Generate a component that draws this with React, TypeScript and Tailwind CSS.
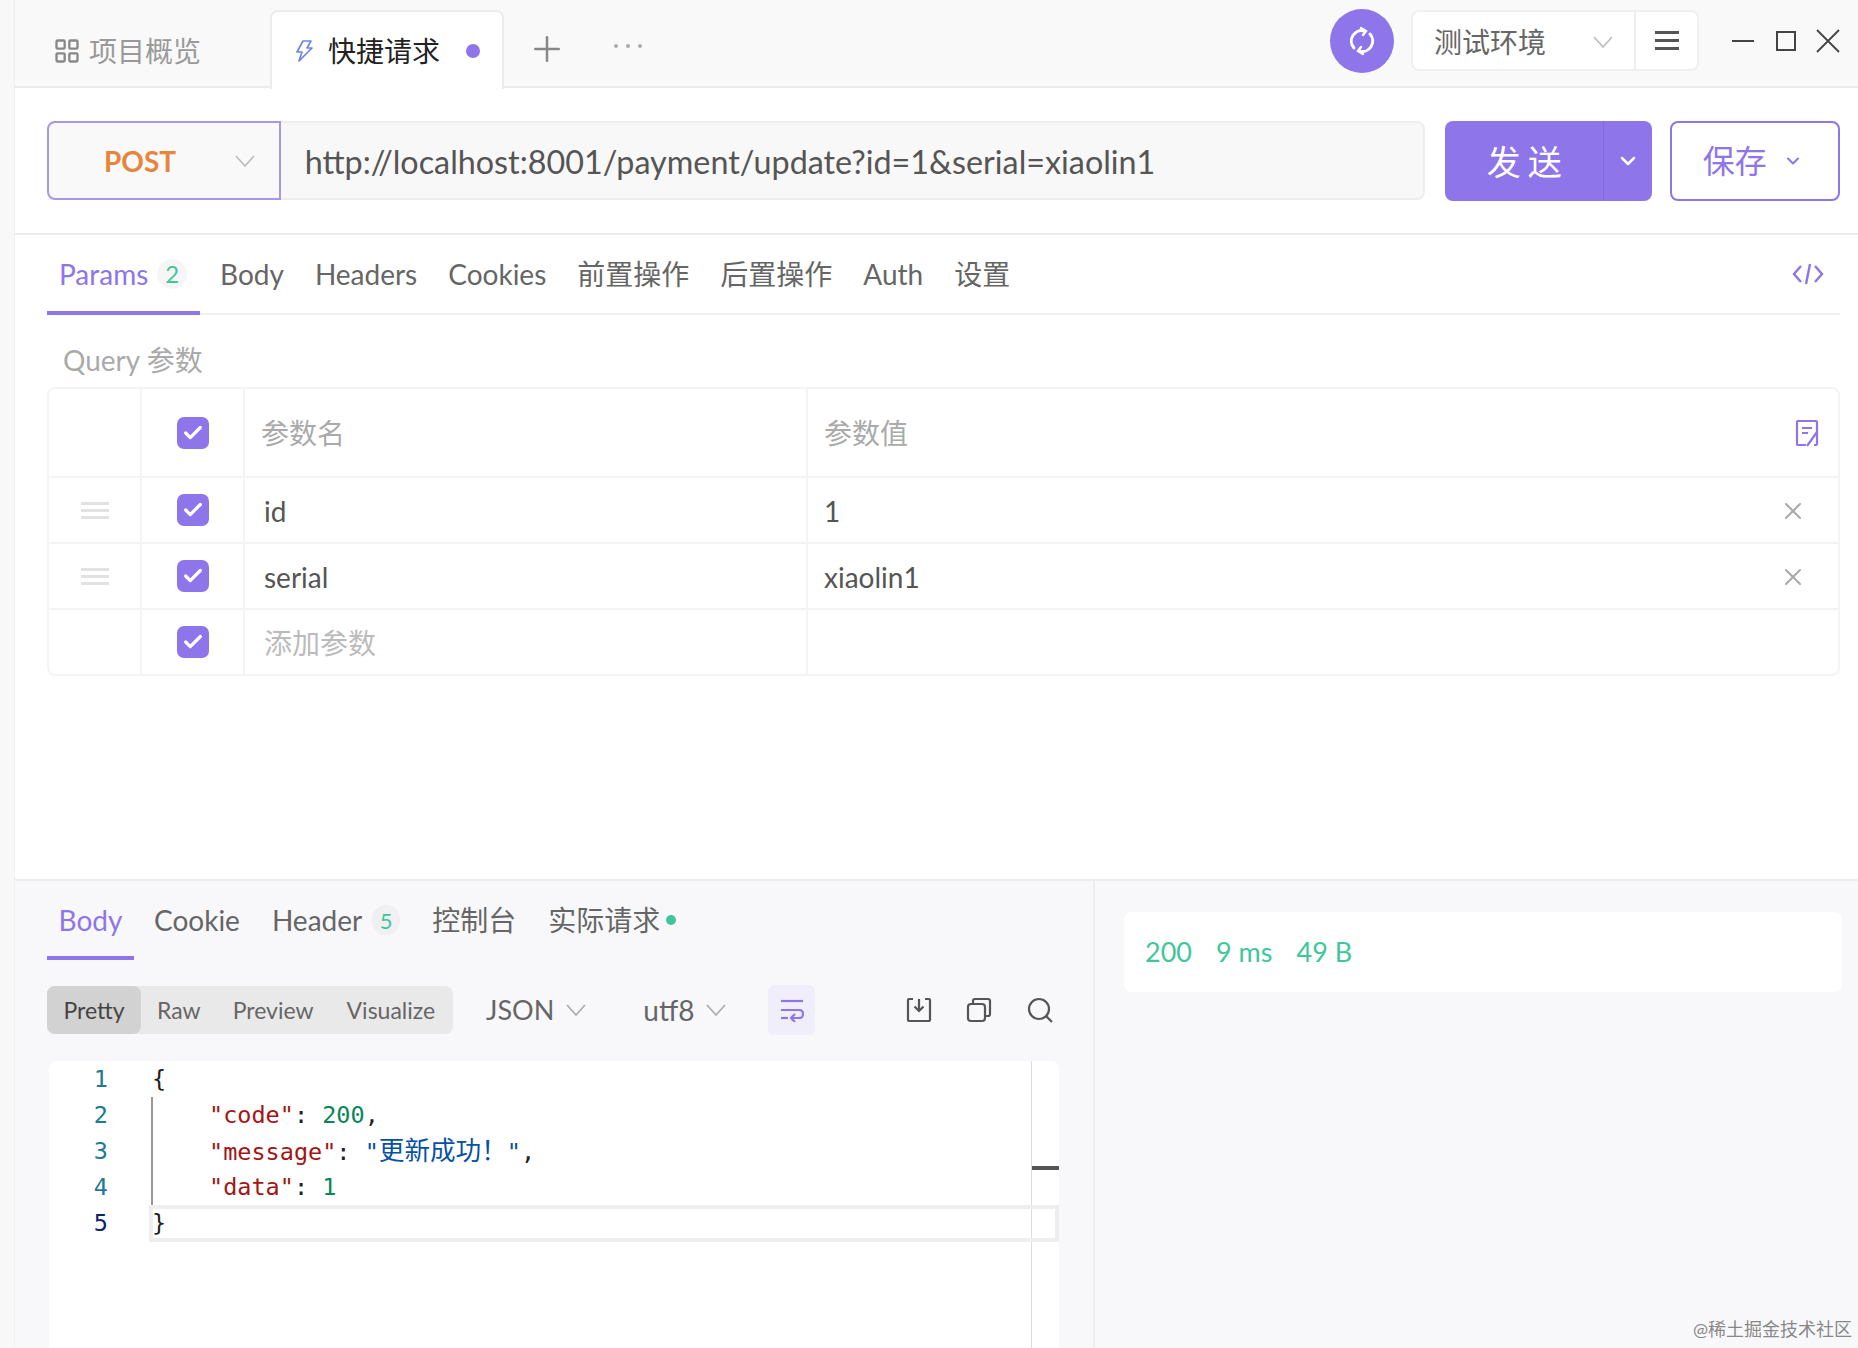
import { ChevronDown, LayoutGrid, Plus, X, Check } from 'lucide-react';

const font = { fontFamily: 'Lato, "Noto Sans CJK SC", sans-serif' };

function Checkbox() {
  return (
    <div className="w-8 h-8 rounded-[7px] bg-[#8f75ea] flex items-center justify-center">
      <Check className="w-[22px] h-[22px] text-white" strokeWidth={3.5} />
    </div>
  );
}

function Grip() {
  return (
    <div className="flex flex-col gap-[4px] w-7">
      <div className="h-[3px] bg-[#e2e2e2]" />
      <div className="h-[3px] bg-[#e2e2e2]" />
      <div className="h-[3px] bg-[#e2e2e2]" />
    </div>
  );
}

function ThinChevron({ className }: { className: string }) {
  return (
    <svg viewBox="0 0 20 12" className={className} fill="none" stroke="currentColor" strokeWidth="1.6">
      <path d="M1 1 L10 11 L19 1" />
    </svg>
  );
}

function ParamRow({ name, value, grip }: { name: string; value: string; grip?: boolean }) {
  return (
    <div className="flex h-[66px] border-t-2 border-[#f3f4f5]">
      <div className="w-[93px] flex items-center justify-center border-r-2 border-[#f3f4f5]">{grip && <Grip />}</div>
      <div className="w-[103px] flex items-center justify-center border-r-2 border-[#f3f4f5]"><Checkbox /></div>
      <div className={`w-[563px] flex items-center pl-[19px] pt-[2px] border-r-2 border-[#f3f4f5] ${name ? 'text-[#555]' : 'text-[#bbb]'}`}>{name || '添加参数'}</div>
      <div className="flex-1 flex items-center justify-between pl-4 pr-[31px] pt-[2px] text-[#555]">
        <span>{value}</span>
        {value && <X className="w-7 h-7 text-[#aaa]" strokeWidth={1.8} />}
      </div>
    </div>
  );
}

export default function App() {
  const reqTabs = ['Body', 'Headers', 'Cookies', '前置操作', '后置操作', 'Auth', '设置'];

  return (
    <div className="relative flex w-[1858px] h-[1348px] overflow-hidden bg-white text-[28px]" style={font}>
      <div className="w-[15px] shrink-0 bg-[#f8f8f9] border-r border-[#f0f0f0]" />
      <div className="flex-1 flex flex-col min-w-0">
        {/* top tabs */}
        <div className="h-[88px] shrink-0 flex bg-[#f9f9fa] border-b-2 border-[#ececec]">
          <div className="w-[255px] flex items-center pl-[38px] pt-4 text-[#999]">
            <LayoutGrid className="w-7 h-7 mr-2 text-[#888]" strokeWidth={2} />
            <span>项目概览</span>
          </div>
          <div className="w-[234px] h-[79px] mt-[10px] flex items-center bg-white border-2 border-b-0 border-[#ececec] rounded-t-[8px] pl-[23px] pt-[1px] -mb-[2px] text-[#222]">
            <svg viewBox="0 0 18 22" className="w-[18px] h-[22px] mr-[15px]" fill="none" stroke="#6f86e0" strokeWidth="1.7" strokeLinejoin="round">
              <path d="M8 1 H16 L12 8 H17 L4 21 L7 12 H2 Z" />
            </svg>
            <span>快捷请求</span>
            <span className="ml-[26px] w-[14px] h-[14px] rounded-full bg-[#8f75ea]" />
          </div>
          <div className="w-[86px] flex items-center justify-center pt-[11px] text-[#888]">
            <Plus className="w-10 h-10" strokeWidth={1.5} />
          </div>
          <div className="flex items-center gap-[8px] ml-6 pt-[6px]">
            <span className="w-[4px] h-[4px] rounded-full bg-[#aaa]" />
            <span className="w-[4px] h-[4px] rounded-full bg-[#aaa]" />
            <span className="w-[4px] h-[4px] rounded-full bg-[#aaa]" />
          </div>
          <div className="ml-auto flex items-start pt-[9px]">
            <div className="w-16 h-16 rounded-full bg-[#8f75ea] flex items-center justify-center">
              <svg viewBox="0 0 32 32" className="w-8 h-8" fill="none" stroke="white" strokeWidth="3" strokeLinecap="round">
                <path d="M19 6 A10.5 10.5 0 0 0 8 23" />
                <path d="M13 26 A10.5 10.5 0 0 0 24 9" />
                <path d="M15 3 L20 6 L17 10" strokeWidth="2.4" />
                <path d="M17 29 L12 26 L15 22" strokeWidth="2.4" />
              </svg>
            </div>
            <div className="ml-[17px] mt-[1px] w-[288px] h-[61px] flex bg-white border-2 border-[#f0f0f0] rounded-[8px]">
              <div className="w-[223px] flex items-center justify-between px-[21px] pt-[2px] border-r-2 border-[#eee] text-[#666]">
                <span>测试环境</span>
                <ThinChevron className="w-5 h-3 text-[#bbb]" />
              </div>
              <div className="flex-1 flex flex-col items-center justify-center gap-[5px]">
                <div className="w-6 h-[3px] bg-[#555]" />
                <div className="w-6 h-[3px] bg-[#555]" />
                <div className="w-6 h-[3px] bg-[#555]" />
              </div>
            </div>
            <div className="ml-[33px] mr-[18px] mt-[20px] flex items-start">
              <div className="w-[22px] h-[2px] mt-[11px] bg-[#444]" />
              <div className="ml-[22px] mt-[2px] w-[20px] h-[20px] border-2 border-[#444]" />
              <svg viewBox="0 0 24 24" className="ml-[20px] w-6 h-6" fill="none" stroke="#444" strokeWidth="1.8">
                <path d="M1 1 L23 23 M23 1 L1 23" />
              </svg>
            </div>
          </div>
        </div>

        {/* url row */}
        <div className="h-[147px] shrink-0 flex pl-[32px] pr-[18px] pt-[33px] border-b-2 border-[#ededed]">
          <div className="w-[234px] h-[79px] flex items-center bg-[#f9f9f9] border-2 border-[#a996e8] rounded-l-[8px] pl-[55px] pr-6 justify-between">
            <span className="text-[#e8853d] font-bold text-[28px]">POST</span>
            <ThinChevron className="w-5 h-3 text-[#bbb]" />
          </div>
          <div className="w-[1146px] h-[79px] flex items-center bg-[#f8f8f8] border-2 border-l-0 border-[#eee] rounded-r-[8px] pl-6 pt-[3px] text-[#555] text-[32.3px]">
            http://localhost:8001/payment/update?id=1&amp;serial=xiaolin1
          </div>
          <div className="ml-5 w-[208px] h-[80px] flex bg-[#8f75ea] rounded-[8px] text-white">
            <div className="w-[159px] flex items-center justify-center pl-[8px] text-[34px] tracking-[7px] border-r border-[#8569e0]">发送</div>
            <div className="flex-1 flex items-center justify-center"><ChevronDown className="w-6 h-6" strokeWidth={2.5} /></div>
          </div>
          <div className="ml-[18px] w-[170px] h-[80px] flex items-center justify-center gap-4 pr-[5px] bg-white border-2 border-[#8f75ea] rounded-[8px] text-[#8f75ea] text-[32px]">
            <span>保存</span>
            <ChevronDown className="w-5 h-5" strokeWidth={2.5} />
          </div>
        </div>

        {/* request panel */}
        <div className="h-[646px] shrink-0 pl-[32px] pr-[18px] border-b-2 border-[#ededed]">
          <div className="h-[80px] flex border-b-2 border-[#f1f1f1] text-[#666]">
            <div className="w-[153px] h-[80px] flex items-center pl-[12px] pt-[2px] border-b-4 border-[#8f75ea] text-[#8f75ea]">
              <span>Params</span>
              <span className="ml-[9px] w-[30px] h-[30px] rounded-full bg-[#f6f6f6] flex items-center justify-center text-[#3fc79b] text-[24px]">2</span>
            </div>
            <div className="flex items-center gap-[31px] ml-5">
              {reqTabs.map((tab) => (
                <span key={tab}>{tab}</span>
              ))}
            </div>
            <div className="ml-auto flex items-center pr-[16px]">
              <svg viewBox="0 0 32 24" className="w-8 h-6" fill="none" stroke="#8f75ea" strokeWidth="2.4">
                <path d="M9 4 L2 12 L9 20" />
                <path d="M23 4 L30 12 L23 20" />
                <path d="M18 2 L14 22" />
              </svg>
            </div>
          </div>
          <div className="h-[72px] pl-4 pt-[18px] flex items-center text-[#aaa]">Query 参数</div>
          <div className="border-2 border-[#f3f4f5] rounded-[8px]">
            <div className="flex h-[87px]">
              <div className="w-[93px] border-r-2 border-[#f3f4f5]" />
              <div className="w-[103px] flex items-center justify-center border-r-2 border-[#f3f4f5]"><Checkbox /></div>
              <div className="w-[563px] flex items-center pl-4 border-r-2 border-[#f3f4f5] text-[#aaa]">参数名</div>
              <div className="flex-1 flex items-center justify-between pl-4 pr-[19px] text-[#aaa]">
                <span>参数值</span>
                <svg viewBox="0 0 24 28" className="w-6 h-7" fill="none" stroke="#8f75ea" strokeWidth="2.2">
                  <path d="M11 26 H3 Q2 26 2 25 V3 Q2 2 3 2 H21 Q22 2 22 3 V25 Q22 26 21 26 H19" />
                  <path d="M7 9 H17 M7 14 H13" />
                  <path d="M22 13 L12 27" />
                </svg>
              </div>
            </div>
            <ParamRow name="id" value="1" grip />
            <ParamRow name="serial" value="xiaolin1" grip />
            <ParamRow name="" value="" />
          </div>
        </div>

        {/* response */}
        <div className="flex-1 flex bg-[#f8f8fb] min-h-0">
          <div className="w-[1080px] shrink-0 pl-[32px] pr-[34px] border-r-2 border-[#eeeef0] flex flex-col">
            <div className="h-[79px] flex gap-8 text-[#666]">
              <div className="w-[87px] h-[79px] flex items-center justify-center pt-[3px] border-b-4 border-[#8f75ea] text-[#8f75ea]">Body</div>
              <div className="flex items-center gap-8 -ml-[12px] pb-[1px]">
                <span>Cookie</span>
                <span className="flex items-center">Header<span className="ml-[10px] w-[28px] h-[30px] rounded-full bg-[#f0f0f3] flex items-center justify-center text-[#3fc79b] text-[22px]">5</span></span>
                <span>控制台</span>
                <span className="flex items-center">实际请求<span className="ml-[6px] w-[10px] h-[10px] rounded-full bg-[#3fc79b]" /></span>
              </div>
            </div>
            <div className="h-[48px] mt-[26px] flex items-center text-[23px] text-[#666]">
              <div className="w-[406px] h-[48px] flex items-center bg-[#e9e9e9] rounded-[8px]">
                <div className="w-[94px] h-[48px] flex items-center justify-center bg-[#d2d2d2] rounded-[8px] text-[#444]">Pretty</div>
                <span className="ml-4">Raw</span>
                <span className="ml-8">Preview</span>
                <span className="ml-[33px]">Visualize</span>
              </div>
              <span className="ml-[33px] text-[27px]">JSON</span>
              <ThinChevron className="ml-3 w-5 h-3 text-[#aaa]" />
              <span className="ml-[57px] text-[28px]">utf8</span>
              <ThinChevron className="ml-3 w-5 h-3 text-[#aaa]" />
              <div className="ml-[42px] w-[47px] h-[50px] flex items-center justify-center bg-[#f1eefb] rounded-[6px]">
                <svg viewBox="0 0 26 24" className="w-[26px] h-6" fill="none" stroke="#8f75ea" strokeWidth="2.2">
                  <path d="M2 3 H24" />
                  <path d="M2 12 H20 Q24 12 24 16 Q24 20 20 20 H13" />
                  <path d="M2 20 H9" />
                  <path d="M16 16 L12 20 L16 24" />
                </svg>
              </div>
              <svg viewBox="0 0 26 26" className="ml-[91px] w-[26px] h-[26px]" fill="none" stroke="#555" strokeWidth="2.2">
                <path d="M7 2 H3 Q2 2 2 3 V23 Q2 24 3 24 H23 Q24 24 24 23 V3 Q24 2 23 2 H19" />
                <path d="M13 2 V13 M8.5 9.5 L13 14 L17.5 9.5" />
              </svg>
              <svg viewBox="0 0 26 26" className="ml-[34px] w-[26px] h-[26px]" fill="none" stroke="#555" strokeWidth="2.2">
                <rect x="2" y="7" width="17" height="17" rx="3" />
                <path d="M7 7 V4 Q7 2 9 2 H22 Q24 2 24 4 V17 Q24 19 22 19 H19" />
              </svg>
              <svg viewBox="0 0 26 26" className="ml-[35px] w-[26px] h-[26px]" fill="none" stroke="#555" strokeWidth="2.2">
                <circle cx="12" cy="12" r="10" />
                <path d="M19 19 L25 25" />
              </svg>
            </div>
            <div className="relative mt-[27px] ml-[2px] flex-1 flex bg-white rounded-t-[8px] text-[23.5px] leading-[36px]" style={{ fontFamily: '"DejaVu Sans Mono", "Noto Sans CJK SC", monospace' }}>
              <div className="w-[102px] shrink-0 text-[#237893] text-right pr-[43px]">
                <div>1</div>
                <div>2</div>
                <div>3</div>
                <div>4</div>
                <div className="text-[#0b216f]">5</div>
              </div>
              <div className="flex-1 text-[#222]">
                <div className="pl-[1px]">{'{'}</div>
                <div className="border-l-2 border-[#999] pl-[56px] whitespace-pre">
                  <div className="h-9"><span className="text-[#a31515]">"code"</span>: <span className="text-[#098658]">200</span>,</div>
                  <div className="h-9"><span className="text-[#a31515]">"message"</span>: <span className="text-[#0451a5]">"<span className="text-[25.6px]">更新成功！</span>"</span>,</div>
                  <div className="h-9"><span className="text-[#a31515]">"data"</span>: <span className="text-[#098658]">1</span></div>
                </div>
                <div className="pl-[1px]">{'}'}</div>
              </div>
              <div className="w-[28px] shrink-0 border-l border-[#ddd]">
                <div className="mt-[105px] h-1 bg-[#555]" />
              </div>
              <div className="absolute left-[100px] right-0 top-[144px] h-[37px] border-4 border-[#eeeeee]" />
            </div>
          </div>
          <div className="flex-1 pl-[29px] pr-[16px] pt-[31px]">
            <div className="h-[80px] flex items-center gap-6 pl-[21px] bg-white rounded-[8px] text-[#3fc79b] text-[27px]">
              <span>200</span>
              <span>9 ms</span>
              <span>49 B</span>
            </div>
          </div>
        </div>
      </div>
      <div className="absolute right-[6px] bottom-[5px] text-[18px] text-[#888]">@稀土掘金技术社区</div>
    </div>
  );
}
